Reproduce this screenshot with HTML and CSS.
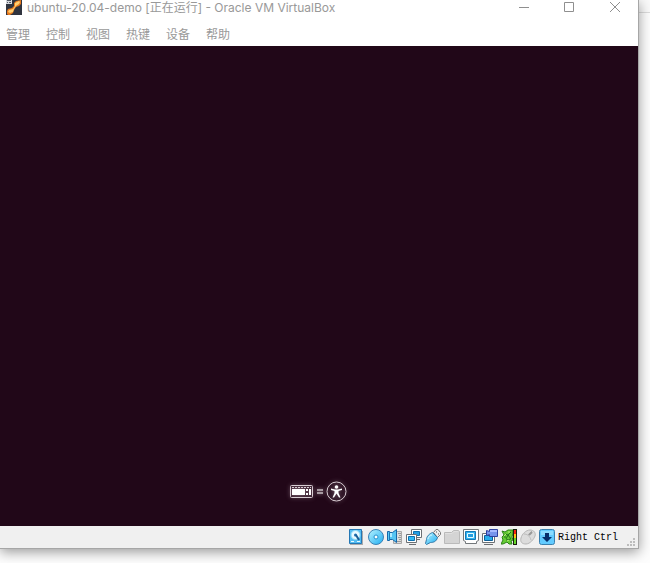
FILE: index.html
```html
<!DOCTYPE html>
<html lang="zh-CN">
<head>
<meta charset="utf-8">
<title>ubuntu-20.04-demo [正在运行] - Oracle VM VirtualBox</title>
<link rel="stylesheet" href="styles.css">
</head>
<body>
<div class="window">
  <header class="titlebar">
    <svg class="app-icon" viewBox="0 0 16 16" aria-hidden="true">
      <path fill="#30343f" d="M0 0h16v15H0z"/>
      <path fill="#e8791c" d="M1 14v-3l1-2 4-1 2-2V3l2-2 5-1v4l-2 2-3 1-2 3-1 3-3 2H2z"/>
      <path fill="#ffcf70" d="M2 12l1-2 4-1 2-3V3l4-2 1 1-1 2-3 2-2 3-1 3-3 1z"/>
      <path fill="#d5d7dc" d="M0 0h6v4H0z"/>
      <path stroke="#555b66" d="M1 .5h4M1 2.500h1M3 2.500h2"/>
    </svg>
    <h1 class="title">ubuntu-20.04-demo [正在运行] - Oracle VM VirtualBox</h1>
    <div class="controls">
      <button class="control" aria-label="最小化"><svg viewBox="0 0 12 12"><path d="M2 6.500h10"/></svg></button>
      <button class="control" aria-label="最大化"><svg viewBox="0 0 12 12"><path d="M1.500 1.500h9v9h-9z"/></svg></button>
      <button class="control" aria-label="关闭"><svg viewBox="0 0 12 12"><path d="M1 1l10 10M11 1L1 11"/></svg></button>
    </div>
  </header>
  <nav class="menubar">
    <button class="menu">管理</button>
    <button class="menu">控制</button>
    <button class="menu">视图</button>
    <button class="menu">热键</button>
    <button class="menu">设备</button>
    <button class="menu">帮助</button>
  </nav>
  <main class="screen">
    <svg class="boot-hint" viewBox="0 0 64 28" role="img" aria-label="键盘 = 辅助功能">
      <g fill="none" stroke="#d8cdd3">
        <rect x="4.500" y="8.500" width="22" height="12" rx="1"/>
        <path stroke-dasharray="2 1" d="M6 10.500h19"/>
        <circle cx="50.500" cy="14.500" r="9.500"/>
      </g>
      <path fill="#fff" d="M6 12h13v6H6zM20 12h2v2h-2zM20 16h2v2h-2zM23 12h2v6h-2z"/>
      <path fill="#a69aa1" d="M31 12h6v2h-6zM31 15h6v2h-6z"/>
      <circle cx="50.500" cy="10" r="1.800" fill="#fff"/>
      <path fill="#fff" d="M45 11.500l4 1h3l4-1v1.500l-3.500 1v2l2 4.500H53l-2.500-4-2.500 4h-1.500l2-4.500v-2L45 13z"/>
    </svg>
  </main>
  <footer class="statusbar">
    <svg class="device" viewBox="1 0 16 16" role="img" aria-label="硬盘">
      <path fill="#aaa" d="M2 2h13v14H2z"/>
      <path fill="#55bdf2" stroke="#2477b4" d="M1.500.500h12v14h-12z"/>
      <circle cx="7.500" cy="6" r="4.500" fill="#e8faff" stroke="#8fdcf8"/>
      <circle cx="7.500" cy="6" r="1.500" fill="#1c6eb0"/>
      <path stroke="#1c5e94" stroke-width="2" d="M8 6l3 5"/>
      <path stroke="#e8faff" d="M3 12.500h3M9 12.500h3"/>
    </svg>
    <svg class="device" viewBox="0 0 16 16" role="img" aria-label="光盘">
      <defs><linearGradient id="blue" x2="1" y2="1"><stop stop-color="#b9f3ff"/><stop offset="1" stop-color="#1eaef2"/></linearGradient></defs>
      <circle cx="8" cy="8" r="7.500" fill="url(#blue)" stroke="#3b82b5"/>
      <circle cx="8" cy="8" r="2" fill="#fff" stroke="#2492cf"/>
    </svg>
    <svg class="device" viewBox="0 0 16 16" role="img" aria-label="音频">
      <path fill="#ddd" stroke="#a8a8a8" d="M8.500 2.500h6v12h-8v-3z"/>
      <path stroke="#999" d="M11 4.500h3M12 6.500h2M11 8.500h3M12 10.500h2M9 12.500h5"/>
      <path fill="#56c5f3" stroke="#1767a8" d="M.500 2.500h2v1h3l4-3v13l-4-3h-3v1h-2z"/>
      <path fill="#b2ebff" d="M3 4h2v4H3z"/>
      <path stroke="#1b79b7" d="M2.500 4v7"/>
    </svg>
    <svg class="device" viewBox="0 0 16 16" role="img" aria-label="网络">
      <path fill="#fff" stroke="#6b6f73" d="M5.500.500h10v8h-10zM9 10.500h5"/>
      <path fill="#239de2" stroke="#0c70b0" d="M7.500 2.500h6v4h-6z"/>
      <path fill="#fff" stroke="#6b6f73" d="M.500 5.500h10v8H.500zM3 15.500h7"/>
      <path fill="#31b9f3" stroke="#0c70b0" d="M2.500 7.500h6v4h-6z"/>
    </svg>
    <svg class="device" viewBox="0 0 16 16" role="img" aria-label="USB">
      <path fill="#eee" stroke="#777" d="M8.500 3.500l2.500-3h2l2.500 3v2l-3 3z"/>
      <path fill="url(#blue)" stroke="#3478a7" d="M7.500 3.500l5 5c-1 4-4 5-7 5l-4 2-1-1 1-4c0-3 3-6 6-7z"/>
      <path stroke="#555" d="M11 3h1M13 5h1"/>
      <path fill="none" stroke="#d9f8ff" d="M3 10c0-2 2-4 4-4"/>
    </svg>
    <svg class="device" viewBox="0 0 16 16" role="img" aria-label="共享文件夹">
      <path fill="#d4d4d4" stroke="#bababa" d="M.500 3.500h7l2-2h5l1 1v12H.500z"/>
      <path fill="none" stroke="#e0e0e0" d="M1 4.500h7l2-2h4"/>
    </svg>
    <svg class="device" viewBox="0 0 16 16" role="img" aria-label="显示">
      <path fill="#fff" stroke="#72777a" d="M.500.500h15v11l-2 1v2h-11v-2l-2-1z"/>
      <path fill="#2fb1ef" stroke="#1478b5" d="M2.500 2.500h10v8h-10z"/>
      <path fill="#249edf" stroke="#e6fbff" d="M4.500 4.500h6v4h-6z"/>
    </svg>
    <svg class="device" viewBox="0 0 16 16" role="img" aria-label="录像">
      <path fill="#fff" stroke="#6b6f73" d="M.500 4.500h12v9H.500zM2 15.500h9"/>
      <path fill="#28adec" stroke="#0c6098" d="M2.500 6.500h8v5h-8z"/>
      <path fill="#7794ec" stroke="#2e3f9f" d="M7.500.500h8v7h-8v-2l-3 1v-5l3 1z"/>
      <path fill="#a7b9ff" d="M8 1h7v2H8z"/>
    </svg>
    <svg class="device" viewBox="0 0 16 16" role="img" aria-label="处理器">
      <path fill="#66cc35" stroke="#2c8218" d="M1 2l3 1 3-2h5v3l-1 4 1 3-2 1 1 3H8l-2-2-4 2H0l2-4-1-3 2-2z"/>
      <path fill="none" stroke="#24751a" d="M4 5l3 1 3-3M5 10l2-4 3 4-5 1M3 8h2"/>
      <path stroke="#b9f07a" d="M3 7l2-2M7 3h2M6 12l2-1"/>
      <path fill="#17200d" d="M12 0h4v16h-4z"/>
      <path fill="#f32212" d="M13 1h2v5h-2z"/>
      <path fill="#ffbd13" d="M13 5h2v4h-2z"/>
      <path fill="#64d629" d="M13 9h2v6h-2z"/>
    </svg>
    <svg class="device" viewBox="0 0 16 16" role="img" aria-label="鼠标">
      <path fill="#dcdcdc" stroke="#b5b5b5" d="M1 9c1-4 5-8 9-8s6 3 5 6-5 8-9 8-6-2-5-6z"/>
      <path fill="none" stroke="#bbb" d="M4 5c3 0 6 2 7 6M8 6l4-4"/>
      <path stroke="#999" stroke-width="2" d="M9 6l3-3"/>
    </svg>
    <svg class="device" viewBox="0 0 16 16" role="img" aria-label="主机键">
      <rect x=".500" y=".500" width="15" height="15" rx="2" fill="#62cbff" stroke="#3a80ae"/>
      <path fill="#8cdcff" d="M2 2h12v4H2z"/>
      <path fill="#062e6b" d="M6 4h4v4h3l-5 5-5-5h3z"/>
    </svg>
    <span class="host-key">Right Ctrl</span>
    <svg class="grip" viewBox="0 0 8 8" aria-hidden="true"><path fill="#bdbdbd" d="M6 0h2v2H6zM3 3h2v2H3zM6 3h2v2H6zM0 6h2v2H0zM3 6h2v2H3zM6 6h2v2H6z"/></svg>
  </footer>
</div>
</body>
</html>
```
FILE: styles.css
```css
* {
  box-sizing: border-box;
}

body {
  margin: 0;
  height: 100vh;
  padding: 0 11px 14px 0;
  overflow: hidden;
  background: linear-gradient(#fafafa 12px, #dcdcdc 12px, #dcdcdc 13px, #fdfdfd 13px);
  font-family: "Inter", "Noto Sans CJK SC", sans-serif;
}

.window {
  display: flex;
  flex-direction: column;
  height: 100%;
  background: #fff;
  border: solid #a6a6a6;
  border-width: 0 1px 1px 0;
  box-shadow: 0 3px 12px rgba(0, 0, 0, 0.4);
}

.titlebar {
  display: flex;
  align-items: flex-start;
  height: 24px;
  padding-left: 6px;
}

.app-icon {
  width: 16px;
  height: 16px;
}

.title {
  flex: 1;
  margin: 0 0 0 5px;
  color: #999;
  font-size: 12px;
  font-weight: 400;
  line-height: 16px;
  white-space: nowrap;
}

.controls {
  display: flex;
}

.control {
  display: flex;
  align-items: center;
  justify-content: center;
  width: 46px;
  height: 14px;
  padding: 0;
  border: 0;
  background: none;
}

.control svg {
  width: 12px;
  height: 12px;
  fill: none;
  stroke: #8f8f8f;
}

.menubar {
  display: flex;
  gap: 16px;
  height: 22px;
  padding-left: 6px;
}

.menu {
  padding: 0 0 2px;
  border: 0;
  background: none;
  color: #999;
  font: 12px/20px "Noto Sans CJK SC", sans-serif;
}

.screen {
  display: flex;
  flex: 1;
  align-items: flex-end;
  justify-content: center;
  padding: 0 2px 21px 0;
  background: #210718;
}

.boot-hint {
  width: 64px;
  height: 28px;
  filter: drop-shadow(0 0 2px #8a707e);
}

.statusbar {
  display: flex;
  align-items: center;
  justify-content: flex-end;
  gap: 3px;
  height: 22px;
  padding-right: 3px;
  background: #f0f0f0;
}

.device {
  width: 16px;
  height: 16px;
}

.host-key {
  color: #000;
  font: 10px/16px "Liberation Mono", monospace;
  padding-top: 2px;
}

.grip {
  align-self: flex-end;
  width: 8px;
  height: 8px;
  margin: 0 0 2px 6px;
}
```
